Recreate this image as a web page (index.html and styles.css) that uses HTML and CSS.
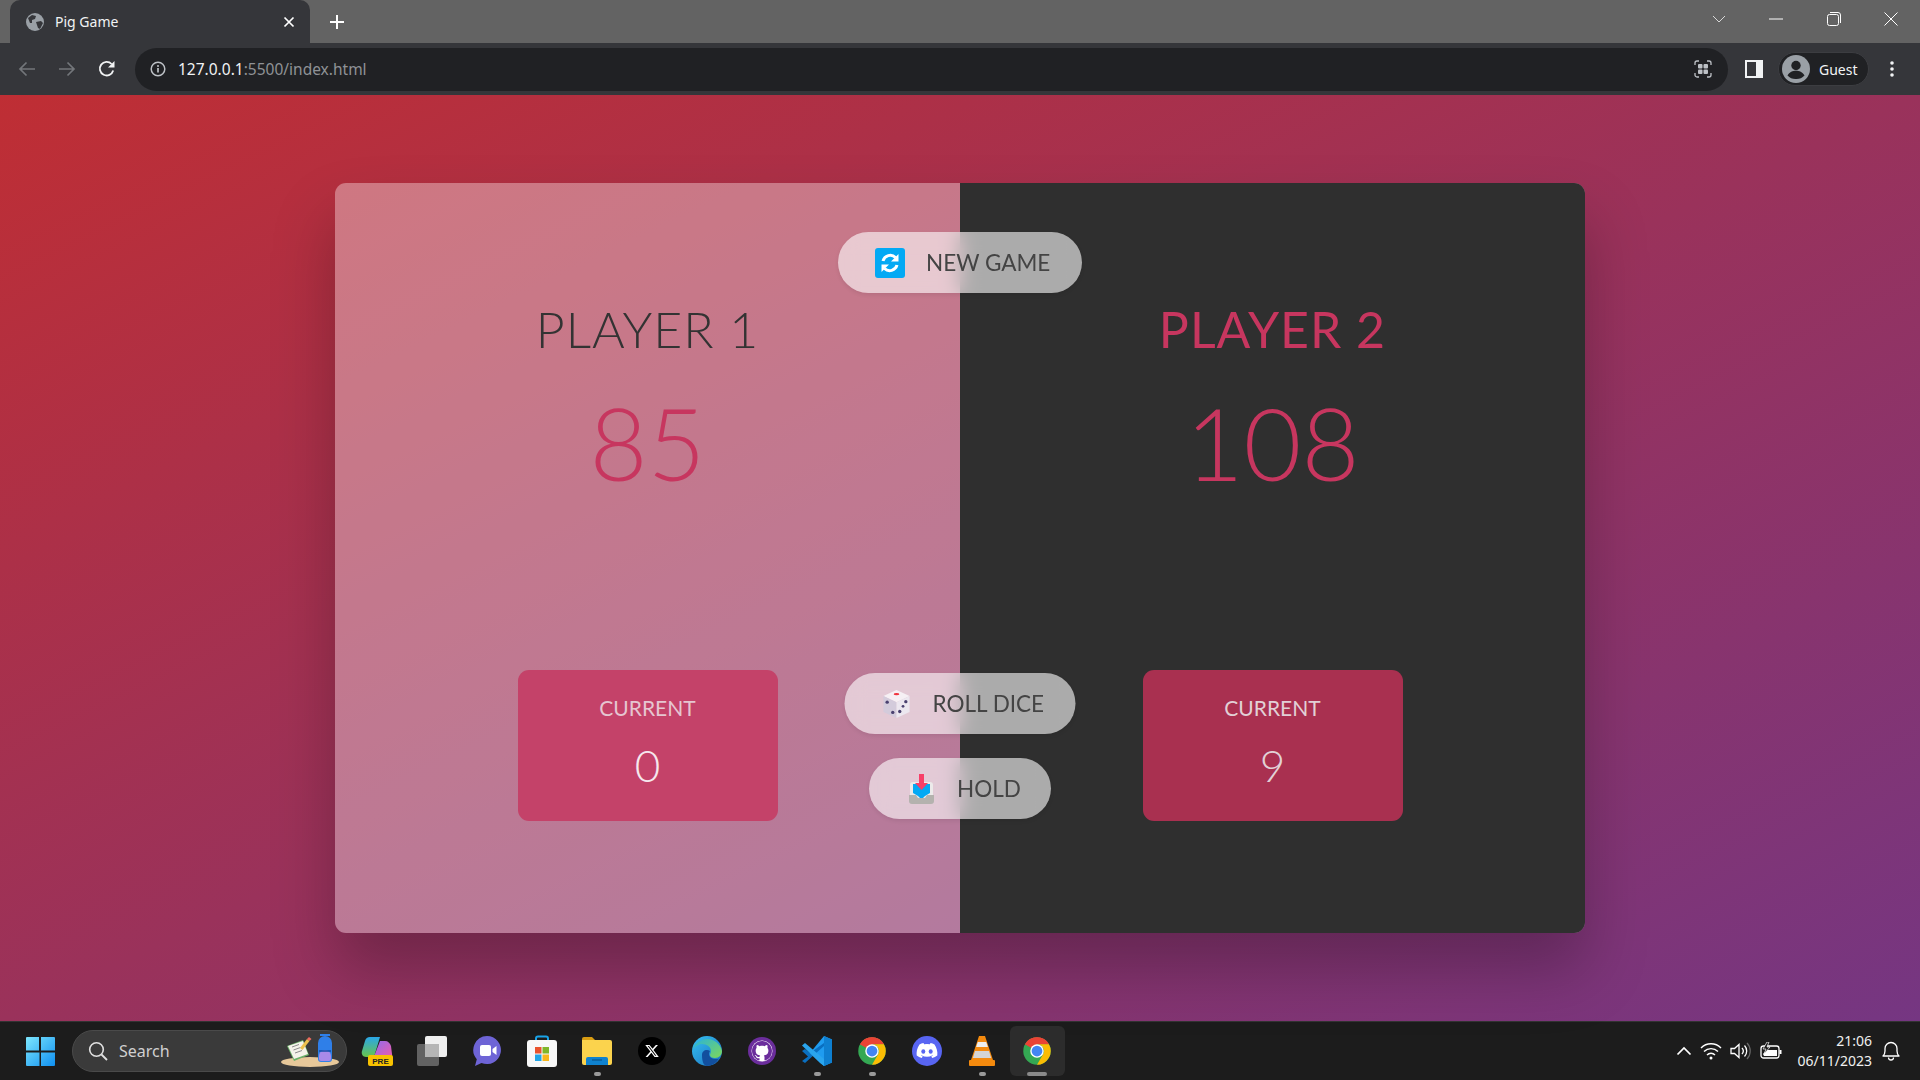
FILE: index.html
```html
<!DOCTYPE html>
<html lang="en">
<head>
    <meta charset="UTF-8">
    <meta name="viewport" content="width=device-width, initial-scale=1.0">
    <title>Pig Game</title>
    <link rel="stylesheet" href="styles.css">
</head>
<body>
    <!-- shared icons -->
    <svg class="defs" width="0" height="0">
        <symbol id="chrome" viewBox="0 0 48 48">
            <circle cx="24" cy="24" r="22" fill="#34a853"/>
            <path d="M24 24L4.95 13A22 22 0 0 1 43.05 13L24 13z" fill="#ea4335"/>
            <path d="M4.95 13A22 22 0 0 1 24 2A22 22 0 0 1 43.05 13H24A11 11 0 0 0 14.47 18.5z" fill="#ea4335"/>
            <path d="M24 13H43.05A22 22 0 0 1 24 46L33.53 29.5A11 11 0 0 0 24 13z" fill="#fbbc04"/>
            <circle cx="24" cy="24" r="10.8" fill="#fff"/>
            <circle cx="24" cy="24" r="8.6" fill="#4285f4"/>
        </symbol>
    </svg>

    <!-- Tab strip -->
    <div class="tabstrip">
        <div class="tab">
            <svg class="favicon" viewBox="0 0 18 18"><circle cx="9" cy="9" r="9" fill="#9aa0a6"/><path d="M2 5l4-3 4 1-1 3-3 1v3l-2 0zM10 9l5-1 2 2-3 6-2-1-1-3z" fill="#35363a"/></svg>
            <span class="tab-title">Pig Game</span>
            <svg class="tab-close" viewBox="0 0 12 12"><path d="M1.5 1.5l9 9M10.5 1.5l-9 9" stroke="#fff" stroke-width="1.7"/></svg>
        </div>
        <svg class="new-tab" viewBox="0 0 16 16"><path d="M8 1v14M1 8h14" stroke="#fff" stroke-width="2"/></svg>
        <div class="window-controls">
            <div class="win-btn"><svg width="14" height="8" viewBox="0 0 14 8"><path d="M1 1l6 6 6-6" fill="none" stroke="#d8d8d8"/></svg></div>
            <div class="win-btn"><svg width="14" height="2" viewBox="0 0 14 2"><path d="M0 1h14" stroke="#fff"/></svg></div>
            <div class="win-btn"><svg width="14" height="14" viewBox="0 0 14 14"><rect x="0.5" y="2.5" width="11" height="11" rx="2" fill="none" stroke="#fff"/><path d="M3 0.5h8a2.5 2.5 0 0 1 2.5 2.5v8" fill="none" stroke="#fff"/></svg></div>
            <div class="win-btn"><svg width="14" height="14" viewBox="0 0 14 14"><path d="M0.5 0.5l13 13M13.5 0.5l-13 13" stroke="#fff"/></svg></div>
        </div>
    </div>

    <!-- Toolbar -->
    <div class="toolbar">
        <div class="tool-btn"><svg width="18" height="16" viewBox="0 0 18 16"><path d="M17 8H2M8.5 1.5L2 8l6.5 6.5" fill="none" stroke="#73767a" stroke-width="1.7"/></svg></div>
        <div class="tool-btn"><svg width="18" height="16" viewBox="0 0 18 16"><path d="M1 8h15M9.5 1.5L16 8l-6.5 6.5" fill="none" stroke="#73767a" stroke-width="1.7"/></svg></div>
        <div class="tool-btn"><svg width="18" height="18" viewBox="0 0 18 18"><path d="M15.2 10.5A6.8 6.8 0 1 1 13.6 4" fill="none" stroke="#f1f3f4" stroke-width="1.8"/><path d="M16.5 1v6.5H10z" fill="#f1f3f4"/></svg></div>
        <div class="omnibox">
            <svg class="info-icon" viewBox="0 0 16 16"><circle cx="8" cy="8" r="6.8" fill="none" stroke="#bdc1c6" stroke-width="1.5"/><path d="M8 7v4.6" stroke="#bdc1c6" stroke-width="1.7"/><circle cx="8" cy="4.9" r="1" fill="#bdc1c6"/></svg>
            <span class="url"><span class="url-host">127.0.0.1</span>:5500/index.html</span>
            <svg class="lens-icon" viewBox="0 0 18 18">
                <path d="M1 5V3a2 2 0 0 1 2-2h2M13 1h2a2 2 0 0 1 2 2v2M17 13v2a2 2 0 0 1-2 2h-2M5 17H3a2 2 0 0 1-2-2v-2" fill="none" stroke="#bdc1c6" stroke-width="1.3"/>
                <rect x="4" y="4" width="4.5" height="4.5" rx="1" fill="#bdc1c6"/><rect x="9.5" y="4" width="4.5" height="4.5" rx="1" fill="#bdc1c6"/><rect x="4" y="9.5" width="4.5" height="4.5" rx="1" fill="#bdc1c6"/><rect x="9.5" y="9.5" width="4.5" height="4.5" rx="1" fill="#bdc1c6"/>
            </svg>
        </div>
        <div class="tool-btn panel-btn"><svg width="18" height="18" viewBox="0 0 18 18"><rect width="18" height="18" fill="#f1f3f4"/><rect x="2" y="2" width="9" height="14" fill="#35363a"/></svg></div>
        <div class="guest-chip">
            <svg class="avatar" viewBox="0 0 28 28"><circle cx="14" cy="14" r="14" fill="#9aa0a6"/><circle cx="14" cy="10.5" r="4.7" fill="#202124"/><path d="M5.5 20.5c2-3.6 5.2-4.7 8.5-4.7s6.5 1.1 8.5 4.7A11 11 0 0 1 14 24a11 11 0 0 1-8.5-3.500z" fill="#202124"/></svg>
            <span class="guest-label">Guest</span>
        </div>
        <div class="tool-btn"><svg width="6" height="18" viewBox="0 0 6 18"><circle cx="3" cy="3" r="1.800" fill="#f1f3f4"/><circle cx="3" cy="9" r="1.800" fill="#f1f3f4"/><circle cx="3" cy="15" r="1.800" fill="#f1f3f4"/></svg></div>
    </div>

    <!-- Game -->
    <main class="page">
        <div class="game">
            <section class="player player-active">
                <h2 class="player-name">PLAYER 1</h2>
                <p class="player-score">85</p>
                <div class="current">
                    <p class="current-label">CURRENT</p>
                    <p class="current-score">0</p>
                </div>
            </section>
            <section class="player player-idle">
                <h2 class="player-name">PLAYER 2</h2>
                <p class="player-score">108</p>
                <div class="current">
                    <p class="current-label">CURRENT</p>
                    <p class="current-score">9</p>
                </div>
            </section>

            <button class="btn btn-new">
                <svg class="btn-icon" viewBox="0 0 30 30">
                    <rect width="30" height="30" rx="3" fill="#03a9f4"/>
                    <path d="M8 13a7.500 7.500 0 0 1 12.500-3.500" fill="none" stroke="#fff" stroke-width="3"/>
                    <path d="M23.500 6v7.500H16z" fill="#fff"/>
                    <path d="M22 17a7.500 7.500 0 0 1-12.500 3.500" fill="none" stroke="#fff" stroke-width="3"/>
                    <path d="M6.500 24v-7.500H14z" fill="#fff"/>
                </svg>
                NEW GAME
            </button>
            <button class="btn btn-roll">
                <svg class="btn-icon" viewBox="0 0 30 32">
                    <path d="M15 1l14 6.500-14 6.500L1 7.500z" fill="#f6f0f4"/>
                    <path d="M1 7.500l14 6.500v17L1 24.500z" fill="#d3cbdb"/>
                    <path d="M29 7.500L15 14v17l14-6.500z" fill="#ece7ef"/>
                    <ellipse cx="15" cy="5.500" rx="3" ry="1.200" fill="#f0353f"/>
                    <circle cx="5" cy="14" r="1.800" fill="#4a4170"/>
                    <circle cx="11" cy="25" r="1.800" fill="#4a4170"/>
                    <circle cx="25" cy="13.500" r="1.800" fill="#4a4170"/>
                    <circle cx="22" cy="18.500" r="1.500" fill="#4a4170"/>
                    <circle cx="18.500" cy="24" r="1.800" fill="#4a4170"/>
                </svg>
                ROLL DICE
            </button>
            <button class="btn btn-hold">
                <svg class="btn-icon" viewBox="0 0 25 30">
                    <rect x="1" y="8" width="23" height="21" rx="3" fill="#eceaea"/>
                    <path d="M0 21h7l2 3h7l2-3h7v6a3 3 0 0 1-3 3H3a3 3 0 0 1-3-3z" fill="#b4b2ae"/>
                    <path d="M4 10h17v9l-5 3-2 2h-3l-2-2-5-3z" fill="#03a9f4"/>
                    <path d="M10 0h5v9h4l-6.500 7L6 9h4z" fill="#f73f68"/>
                </svg>
                HOLD
            </button>
        </div>
    </main>

    <!-- Windows taskbar -->
    <footer class="taskbar">
        <div class="start">
            <svg width="29" height="29" viewBox="0 0 29 29">
                <defs><linearGradient id="winblue" x1="0" y1="0" x2="1" y2="1"><stop offset="0" stop-color="#7de6fd"/><stop offset="1" stop-color="#0f8ff0"/></linearGradient></defs>
                <path d="M1 0h12v13.500H0V1a1 1 0 0 1 1-1zM15 0h13a1 1 0 0 1 1 1v12.500H15zM0 15.500h13.500V29H1a1 1 0 0 1-1-1zM15 15.500h14V28a1 1 0 0 1-1 1H15z" fill="url(#winblue)"/>
            </svg>
        </div>
        <div class="search">
            <svg class="search-icon" width="20" height="20" viewBox="0 0 20 20"><circle cx="8.500" cy="8.500" r="6.800" fill="none" stroke="#e0e0e0" stroke-width="1.600"/><path d="M13.500 13.500L19 19" stroke="#e0e0e0" stroke-width="1.800"/></svg>
            <span class="search-label">Search</span>
            <svg class="search-art" width="60" height="36" viewBox="0 0 60 36">
                <ellipse cx="30" cy="30" rx="29" ry="5" fill="#e7c89a"/>
                <path d="M7 14l16-6 6 15-15 6z" fill="#6bb168"/>
                <path d="M8 14l15-5 5 13-14 5z" fill="#f4f2ea"/>
                <path d="M12 15l7-2.500M13.500 18l7-2.500M15 21l7-2.500" stroke="#8a8a8a" stroke-width="1"/>
                <path d="M20 16l7-9 2.500 2-7 9z" fill="#eec14e"/>
                <path d="M27 7l2-2 2.500 2-2 2z" fill="#ef6b5f"/>
                <path d="M38 27V11a7 7 0 0 1 14 0v16a3 3 0 0 1-3 3h-8a3 3 0 0 1-3-3z" fill="#2f7fe8"/>
                <path d="M40 3h10" stroke="#2f7fe8" stroke-width="2"/>
                <path d="M39 24a6 6 0 0 1 12 0v3a2 2 0 0 1-2 2h-8a2 2 0 0 1-2-2z" fill="#a98ae8"/>
                <path d="M39 19h12" stroke="#174fa8" stroke-width="1.500"/>
            </svg>
        </div>
        <div class="apps">
            <div class="app">
                <svg width="32" height="32" viewBox="0 0 32 32">
                    <defs><linearGradient id="cop1" x1="0" y1="0" x2="0" y2="1"><stop offset="0" stop-color="#2aa6e8"/><stop offset="1" stop-color="#68c44a"/></linearGradient><linearGradient id="cop2" x1="0" y1="0" x2="1" y2="1"><stop offset="0" stop-color="#8e6cf0"/><stop offset="1" stop-color="#f05ca8"/></linearGradient></defs>
                    <path d="M9 2h10l-6 20H5c-3 0-5-3-4-6l3-10c.7-2.500 2.500-4 5-4z" fill="url(#cop1)"/>
                    <path d="M19 6h5c3 0 5 2 6 5l1 8c.5 3-1 5-4 5H12z" fill="url(#cop2)"/>
                    <rect x="7" y="20" width="25" height="11" rx="2" fill="#f8c200"/>
                    <text x="19.500" y="29" class="pre-badge">PRE</text>
                </svg>
            </div>
            <div class="app">
                <svg width="30" height="30" viewBox="0 0 30 30"><rect x="8" y="0" width="22" height="21" rx="2" fill="#efefef"/><rect x="0" y="8" width="22" height="22" rx="2" fill="#6a6a6a" opacity="0.9"/><rect x="8" y="8" width="14" height="13" fill="#b5b5b5"/></svg>
            </div>
            <div class="app">
                <svg width="30" height="32" viewBox="0 0 30 32"><path d="M15 1a14 14 0 1 1-5.500 26.900L3 31l1.800-6.800A14 14 0 0 1 15 1z" fill="#6e64d6"/><rect x="8" y="10" width="11" height="11" rx="2" fill="#fff"/><path d="M20.500 14l4-3v9l-4-3z" fill="#fff"/></svg>
            </div>
            <div class="app">
                <svg width="30" height="32" viewBox="0 0 30 32"><path d="M9 5V3.500a2 2 0 0 1 2-2h8a2 2 0 0 1 2 2V5" fill="none" stroke="#19a3e8" stroke-width="2"/><rect x="0" y="5" width="30" height="27" rx="3" fill="#f8f8f8"/><rect x="8" y="12" width="6.500" height="6.500" fill="#e9532d"/><rect x="15.500" y="12" width="6.500" height="6.500" fill="#7fb62a"/><rect x="8" y="19.500" width="6.500" height="6.500" fill="#22a5e6"/><rect x="15.500" y="19.500" width="6.500" height="6.500" fill="#f8b71c"/></svg>
            </div>
            <div class="app app-open">
                <svg width="30" height="28" viewBox="0 0 30 28"><path d="M0 2a2 2 0 0 1 2-2h8l3 3h-13z" fill="#d89c12"/><path d="M0 3h28a2 2 0 0 1 2 2v21a2 2 0 0 1-2 2H2a2 2 0 0 1-2-2z" fill="#fbd34d"/><path d="M6 20h18a2 2 0 0 1 2 2v6H4v-6a2 2 0 0 1 2-2z" fill="#0f82cf"/><path d="M10 23h10" stroke="#0b5c99" stroke-width="1.500"/></svg>
            </div>
            <div class="app">
                <svg width="28" height="28" viewBox="0 0 28 28"><circle cx="14" cy="14" r="14" fill="#000"/><g transform="translate(6.500 6.500) scale(0.625)"><path d="M18.244 2.250h3.308l-7.227 8.260 8.502 11.240H16.170l-5.214-6.817L4.990 21.750H1.680l7.730-8.835L1.254 2.250H8.080l4.713 6.231zm-1.161 17.520h1.833L7.084 4.126H5.117z" fill="#fff"/></g></svg>
            </div>
            <div class="app">
                <svg width="30" height="30" viewBox="0 0 30 30">
                    <defs><linearGradient id="edge1" x1="0" y1="0" x2="1" y2="1"><stop offset="0" stop-color="#35c1f1"/><stop offset="1" stop-color="#1b6fc0"/></linearGradient><linearGradient id="edge2" x1="0" y1="0" x2="1" y2="1"><stop offset="0" stop-color="#2ab3d8"/><stop offset="1" stop-color="#7fd858"/></linearGradient></defs>
                    <circle cx="15" cy="15" r="15" fill="url(#edge1)"/>
                    <path d="M8 5a15 15 0 0 1 22 10c0 4-3 7-7 7-3 0-5-1-5-3 0-1 1-2 1-4 0-4-4-7-9-7-3 0-7 2-9 5C2 10 4 7 8 5z" fill="url(#edge2)"/>
                    <path d="M10 19c0-3 2-5 5-5 1 0 2 .3 3 1-.5 1-1 2-1 3 0 3 3 5 7 5 1 0 2 0 3-.5A15 15 0 0 1 15 30c-3 0-5-4-5-11z" fill="#124f9e"/>
                </svg>
            </div>
            <div class="app">
                <svg width="28" height="28" viewBox="0 0 28 28"><circle cx="14" cy="14" r="14" fill="#6b2d9c"/><circle cx="14" cy="14" r="10.500" fill="#fff"/><g transform="translate(4 4) scale(1.250)"><path d="M8 0C3.580 0 0 3.580 0 8c0 3.540 2.290 6.530 5.470 7.590.4.070.55-.17.55-.38 0-.19-.01-.82-.01-1.490-2.010.37-2.530-.49-2.690-.94-.09-.23-.48-.94-.82-1.130-.28-.15-.68-.52-.01-.53.63-.01 1.080.58 1.230.82.72 1.210 1.870.87 2.330.66.070-.52.28-.87.51-1.070-1.780-.2-3.640-.89-3.640-3.950 0-.87.31-1.590.82-2.150-.08-.2-.36-1.020.08-2.120 0 0 .67-.21 2.200.82.64-.18 1.320-.27 2-.27s1.360.09 2 .27c1.530-1.040 2.200-.82 2.200-.82.44 1.100.16 1.920.08 2.120.51.56.82 1.270.82 2.150 0 3.070-1.870 3.750-3.650 3.950.29.25.54.73.54 1.480 0 1.070-.01 1.930-.01 2.200 0 .21.15.46.55.38A8.013 8.013 0 0 0 16 8c0-4.420-3.580-8-8-8z" fill="#6b2d9c"/></g></svg>
            </div>
            <div class="app app-open">
                <svg width="30" height="30" viewBox="0 0 30 30"><path d="M22 0l8 3.500v23L22 30 8 17z" fill="#1f9cf0"/><path d="M22 0v30l8-3.500v-23z" fill="#0e7fd0"/><path d="M22 7L8 17 3 13 0 15l6 5.500L0 25l3 2 19-17z" fill="#0a6fc0"/><path d="M22 23L3 7 0 9.500 18 27l4 3z" fill="#2aa5ee"/></svg>
            </div>
            <div class="app app-open"><svg width="30" height="30"><use href="#chrome"/></svg></div>
            <div class="app">
                <svg width="30" height="30" viewBox="0 0 30 30"><circle cx="15" cy="15" r="15" fill="#5865f2"/><path d="M22.500 8.500A17 17 0 0 0 18.500 7l-.6 1.200a15 15 0 0 0-5.800 0L11.500 7a17 17 0 0 0-4 1.500C5 12.300 4.300 16 4.700 19.600a17 17 0 0 0 5 2.500l1.100-1.700-1.800-.9.400-.3a11.500 11.500 0 0 0 11.200 0l.4.300-1.800.9 1.100 1.700a17 17 0 0 0 5-2.500c.5-4.200-.7-7.800-2.800-11.100z" fill="#fff"/><ellipse cx="11.300" cy="15.500" rx="2" ry="2.300" fill="#5865f2"/><ellipse cx="18.700" cy="15.500" rx="2" ry="2.300" fill="#5865f2"/></svg>
            </div>
            <div class="app app-open">
                <svg width="26" height="30" viewBox="0 0 26 30"><path d="M10 0h6l8 24H2z" fill="#f48a0e"/><path d="M8.800 6h8.400l1.700 5H7.100z" fill="#eee"/><path d="M6 15h14l2.200 7H3.800z" fill="#d4d4d4"/><path d="M1 24h24a1 1 0 0 1 1 1v4a1 1 0 0 1-1 1H1a1 1 0 0 1-1-1v-4a1 1 0 0 1 1-1z" fill="#f48a0e"/></svg>
            </div>
            <div class="app app-active"><svg width="30" height="30"><use href="#chrome"/></svg></div>
        </div>
        <div class="tray">
            <svg class="tray-icon" width="16" height="10" viewBox="0 0 16 10"><path d="M1.500 8.500L8 2l6.500 6.500" fill="none" stroke="#fff" stroke-width="1.700"/></svg>
            <svg class="tray-icon" width="22" height="18" viewBox="0 0 22 18"><path d="M1 6a14 14 0 0 1 20 0M4 9.500a10 10 0 0 1 14 0M7 13a5.500 5.500 0 0 1 8 0" fill="none" stroke="#fff" stroke-width="1.400"/><circle cx="11" cy="16" r="1.500" fill="#fff"/></svg>
            <svg class="tray-icon" width="22" height="18" viewBox="0 0 22 18"><path d="M1 6.500h3.500L9 2.500v13l-4.500-4H1z" fill="none" stroke="#fff" stroke-width="1.300"/><path d="M12 6a4.500 4.500 0 0 1 0 6M14.500 3.500a8 8 0 0 1 0 11" fill="none" stroke="#fff" stroke-width="1.300"/><path d="M17 1a11.500 11.500 0 0 1 0 16" fill="none" stroke="#666" stroke-width="1.200"/></svg>
            <svg class="tray-icon" width="22" height="18" viewBox="0 0 22 18"><rect x="1" y="4" width="18" height="12" rx="2.500" fill="none" stroke="#fff" stroke-width="1.300"/><rect x="19.500" y="8" width="2" height="4" fill="#fff"/><path d="M3 12l4-4h10v6H4z" fill="#fff"/><path d="M7 0L3 7h3l-2 5 6-7H7l2-5z" fill="#1c1c1c" stroke="#fff" stroke-width="0.700"/></svg>
            <div class="clock">
                <span>21:06</span>
                <span>06/11/2023</span>
            </div>
            <svg class="bell" width="18" height="20" viewBox="0 0 18 20"><path d="M1 15c1.500-1.500 2-3 2-5V7.500a6 6 0 0 1 12 0V10c0 2 .5 3.500 2 5z" fill="none" stroke="#fff" stroke-width="1.300" stroke-linejoin="round"/><path d="M6.500 16.500a2.500 2.500 0 0 0 5 0" fill="none" stroke="#fff" stroke-width="1.300"/></svg>
        </div>
    </footer>
</body>
</html>
```

FILE: styles.css
```css
* {
    box-sizing: border-box;
}

body {
    margin: 0;
    padding: 0;
    height: 1080px;
    overflow: hidden;
    display: flex;
    flex-direction: column;
    font-family: "Noto Sans", sans-serif;
    background-color: #1c1c1c;
}

.defs {
    position: absolute;
}

/* Tab strip */
.tabstrip {
    display: flex;
    align-items: center;
    height: 43px;
    background-color: #636363;
}

.tab {
    display: flex;
    align-items: center;
    align-self: stretch;
    width: 300px;
    margin-left: 10px;
    padding: 0 15px 0 16px;
    background-color: #35363a;
    border-radius: 10px 10px 0 0;
}

.favicon {
    width: 18px;
    height: 18px;
    margin-right: 11px;
}

.tab-title {
    flex: 1;
    font-size: 14px;
    color: #f1f3f4;
}

.tab-close {
    width: 12px;
    height: 12px;
}

.new-tab {
    width: 16px;
    height: 16px;
    margin-left: 19px;
}

.window-controls {
    display: flex;
    margin-left: auto;
    align-self: stretch;
    padding-bottom: 6px;
}

.win-btn {
    display: flex;
    align-items: center;
    justify-content: center;
    width: 57.5px;
}

/* Toolbar */
.toolbar {
    display: flex;
    align-items: center;
    height: 52px;
    padding: 0 8px 0 7px;
    background-color: #35363a;
}

.tool-btn {
    display: flex;
    align-items: center;
    justify-content: center;
    width: 40px;
    height: 40px;
    flex-shrink: 0;
}

.omnibox {
    flex: 1;
    display: flex;
    align-items: center;
    height: 43px;
    margin-left: 8px;
    padding: 0 15px;
    background-color: #202124;
    border-radius: 22px;
}

.info-icon {
    width: 16px;
    height: 16px;
    margin-right: 12px;
}

.url {
    flex: 1;
    font-size: 15.5px;
    color: #8f9296;
}

.url-host {
    color: #f1f3f4;
}

.lens-icon {
    width: 18px;
    height: 18px;
    margin-right: 1px;
}

.panel-btn {
    margin-left: 6px;
}

.guest-chip {
    display: flex;
    align-items: center;
    width: 91px;
    height: 34px;
    margin-left: 4px;
    padding-left: 3px;
    background-color: #202124;
    border: 1px solid #3c3d41;
    border-radius: 17px;
}

.avatar {
    width: 28px;
    height: 28px;
    margin-right: 9px;
}

.guest-label {
    font-size: 14px;
    color: #f1f3f4;
}

.toolbar .tool-btn:last-child {
    margin-left: 3px;
}

/* Game */
.page {
    flex: 1;
    display: flex;
    align-items: center;
    justify-content: center;
    background-image: linear-gradient(to top left, #753682 0%, #bf2e34 100%);
}

.game {
    position: relative;
    display: grid;
    grid-template-columns: 1fr 1fr;
    width: 1250px;
    height: 750px;
    overflow: hidden;
    border-radius: 11px;
    background-color: rgba(255, 255, 255, 0.35);
    box-shadow: 0 37px 62px rgba(0, 0, 0, 0.25);
}

.player {
    display: flex;
    flex-direction: column;
    align-items: center;
    padding: 116px 0 112px;
    font-family: "Lato", "Noto Sans", sans-serif;
}

.player-idle {
    background-color: #2f2f2f;
}

.player-name {
    margin: 0 0 33px;
    font-size: 50px;
    line-height: 60px;
    letter-spacing: 1px;
    font-weight: 300;
    color: #333;
}

.player-idle .player-name {
    font-weight: 400;
    color: #c7365f;
}

.player-score {
    margin: 0;
    font-size: 100px;
    line-height: 100px;
    font-weight: 300;
    color: #c7365f;
}

.current {
    margin-top: auto;
    width: 260px;
    height: 151px;
    padding-top: 22px;
    text-align: center;
    background-color: #c44269;
    border-radius: 11px;
}

.player-idle .current {
    background-color: #a93050;
}

.current-label {
    margin: 0 0 16px;
    font-size: 21px;
    line-height: 32px;
    color: #e6c6d1;
}

.current-score {
    margin: 0;
    font-size: 44px;
    line-height: 50px;
    font-weight: 300;
    color: #f6e8ee;
}

.player-idle .current-label,
.player-idle .current-score {
    color: #e2d0d6;
}

/* Buttons sit on top of the two halves */
.btn {
    position: absolute;
    left: 50%;
    transform: translateX(-50%);
    display: flex;
    align-items: center;
    height: 61px;
    padding: 0;
    border: none;
    border-radius: 31px;
    font-family: "Lato", "Noto Sans", sans-serif;
    font-size: 22.5px;
    color: #444;
    background-color: rgba(255, 255, 255, 0.6);
    backdrop-filter: blur(10px);
    box-shadow: 0 2px 4px rgba(0, 0, 0, 0.08);
}

.btn-icon {
    flex-shrink: 0;
    height: 30px;
}

.btn-new {
    top: 49px;
    width: 244px;
    padding-left: 37px;
    gap: 21px;
}

.btn-new .btn-icon {
    width: 30px;
}

.btn-roll {
    top: 490px;
    width: 231px;
    padding-left: 38px;
    gap: 22px;
}

.btn-roll .btn-icon {
    width: 28px;
}

.btn-hold {
    top: 575px;
    width: 182px;
    padding-left: 40px;
    gap: 23px;
}

.btn-hold .btn-icon {
    width: 25px;
}

/* Taskbar */
.taskbar {
    display: flex;
    align-items: center;
    height: 59px;
    padding-right: 20px;
    background-color: #1c1c1c;
    border-top: 1px solid #333;
}

.start {
    display: flex;
    justify-content: center;
    width: 58px;
    margin-left: 11px;
}

.search {
    display: flex;
    align-items: center;
    width: 275px;
    height: 42px;
    margin-left: 3px;
    padding: 0 6px 0 15px;
    background-color: #3a3a3a;
    border: 1px solid #4a4a4a;
    border-radius: 21px;
}

.search-label {
    flex: 1;
    margin-left: 11px;
    font-size: 16px;
    color: #d0d0d0;
}

.search-art {
    margin-bottom: 2px;
}

.apps {
    display: flex;
    margin-left: 2.5px;
}

.app {
    position: relative;
    display: flex;
    align-items: center;
    justify-content: center;
    width: 55px;
    height: 50px;
}

.app-open::after {
    content: "";
    position: absolute;
    left: 24px;
    bottom: 0;
    width: 7px;
    height: 4px;
    border-radius: 2px;
    background-color: #9a9a9a;
}

.app-active {
    background-color: #2c2c2c;
    border-radius: 6px;
}

.app-active::after {
    content: "";
    position: absolute;
    left: 17px;
    bottom: 0;
    width: 20px;
    height: 4px;
    border-radius: 2px;
    background-color: #8a8a8a;
}

.pre-badge {
    font-family: "Liberation Sans", sans-serif;
    font-size: 8px;
    font-weight: bold;
    text-anchor: middle;
    fill: #222;
}

.tray {
    display: flex;
    align-items: center;
    margin-left: auto;
}

.tray-icon {
    margin-left: 8px;
}

.clock {
    display: flex;
    flex-direction: column;
    align-items: flex-end;
    margin-left: 16px;
    font-size: 14px;
    line-height: 20px;
    color: #f0f0f0;
}

.bell {
    margin-left: 10px;
}
```
